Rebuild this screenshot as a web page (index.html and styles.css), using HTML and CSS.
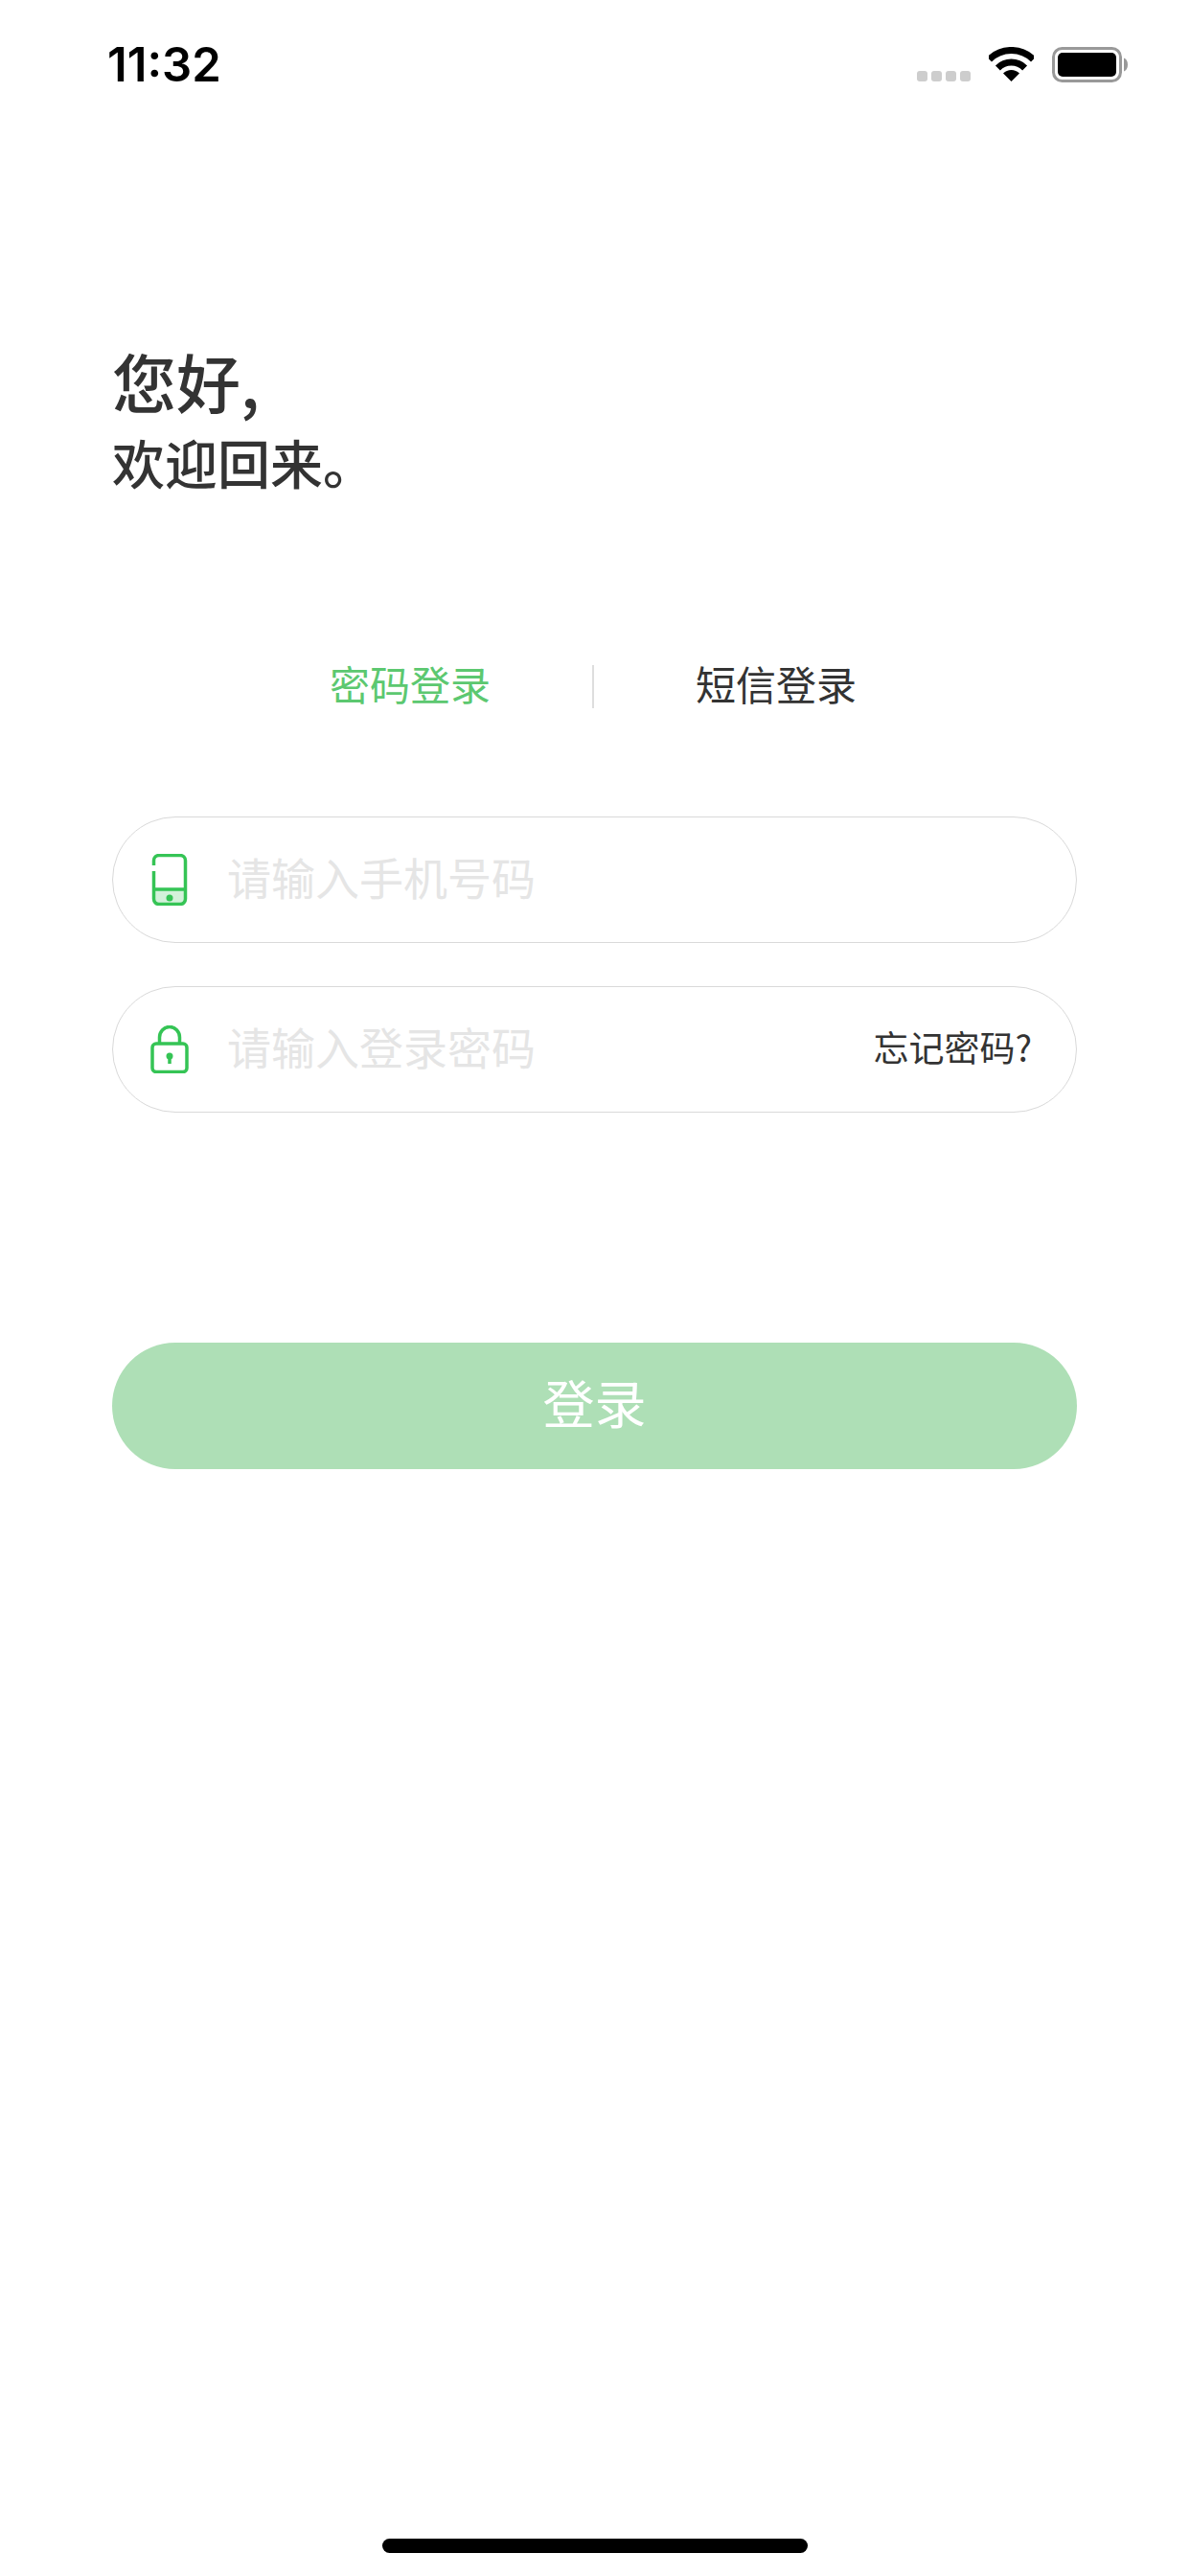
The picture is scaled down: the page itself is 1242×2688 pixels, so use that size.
FILE: index.html
```html
<!DOCTYPE html>
<html lang="zh-CN">
<head>
  <meta charset="UTF-8" />
  <meta name="viewport" content="width=device-width, initial-scale=1.0"/>
  <title>登录</title>
  <link rel="stylesheet" href="styles.css">
</head>
<body>
  <div class="page">
    <div class="status-bar">
      <div class="time">11:32</div>
      <div class="status-icons">
        <div class="signal"><i></i><i></i><i></i><i></i></div>
        <svg class="wifi" width="47" height="36" viewBox="0 0 47 36">
          <path d="M.5 13a32.5 32.5 0 0 1 46 0" fill="none" stroke="#000" stroke-width="7"/>
          <path d="M9.4 21.9a20 20 0 0 1 28.2 0" fill="none" stroke="#000" stroke-width="7"/>
          <path d="M23.5 36L15 27.5a12 12 0 0 1 17 0z" fill="#000"/>
        </svg>
        <svg class="battery" width="79" height="37" viewBox="0 0 79 37">
          <rect x="1.5" y="1.5" width="70" height="34" rx="9" fill="none" stroke="#999" stroke-width="3"/>
          <rect x="6" y="6" width="61" height="25" rx="5" fill="#000"/>
          <path d="M75 11.5c2.5 1 4 3.500 4 7s-1.500 6-4 7z" fill="#999"/>
        </svg>
      </div>
    </div>

    <div class="content">
      <h1 class="hello">您好,</h1>
      <h2 class="welcome">欢迎回来。</h2>

      <div class="tabs">
        <div class="tab active">密码登录</div>
        <div class="tab-line"></div>
        <div class="tab">短信登录</div>
      </div>

      <div class="field">
        <svg class="field-icon" width="40" height="54" viewBox="0 0 40 54">
          <path d="M3.500 37h33v10a5.500 5.500 0 0 1-5.500 5.500h-22a5.500 5.500 0 0 1-5.500-5.500z" fill="#d3f1da"/>
          <path d="M3.500 12v-5a5.500 5.500 0 0 1 5.500-5.500h22a5.500 5.500 0 0 1 5.500 5.500v40a5.500 5.500 0 0 1-5.500 5.500h-22a5.500 5.500 0 0 1-5.500-5.500v-29M3.500 37h33" fill="none" stroke="#35c455" stroke-width="3.500"/>
          <circle cx="20" cy="46" r="3.500" fill="#35c455"/>
        </svg>
        <span class="placeholder">请输入手机号码</span>
      </div>

      <div class="field">
        <svg class="field-icon" width="40" height="50" viewBox="0 0 40 50">
          <path d="M9.500 19v-6.500a10.500 11 0 0 1 21 0v6.500" fill="none" stroke="#35c455" stroke-width="3.500"/>
          <rect x="2" y="19" width="36" height="29.500" rx="4" fill="none" stroke="#35c455" stroke-width="3.500"/>
          <circle cx="20" cy="32" r="3.500" fill="#35c455"/>
          <path d="M20 33v7" fill="none" stroke="#35c455" stroke-width="3.500"/>
        </svg>
        <span class="placeholder">请输入登录密码</span>
        <span class="forgot">忘记密码?</span>
      </div>

      <div class="login-btn">登录</div>
    </div>

    <div class="home-bar"></div>
  </div>
</body>
</html>
```
FILE: styles.css
```css
:root {
  --font-cjk: 'Noto Sans CJK SC', 'Noto Sans', sans-serif;
  --color-green: #5cc870;
  --color-text: #333333;
  --color-line: #d9d9d9;
}
* { box-sizing: border-box; margin: 0; padding: 0; }
body {
  font-family: var(--font-cjk);
  background: #fff;
  color: var(--color-text);
}
.page {
  height: 2688px;
  display: flex; flex-direction: column;
  overflow: hidden;
}

.status-bar {
  display: flex; justify-content: space-between; align-items: flex-end;
  padding: 49px 65px 0 112px;
}
.time {
  font-family: 'Inter', sans-serif;
  font-size: 49px; font-weight: 600; line-height: 37px;
  color: #000;
}
.status-icons { display: flex; align-items: flex-end; gap: 19px; }
.signal { display: flex; gap: 4px; margin-bottom: 1px; }
.signal i { width: 11px; height: 11px; border-radius: 3px; background: #cdcdcd; }
.wifi { margin-bottom: 1px; }

.content { padding: 271px 118px 0 117px; }
.hello { font-size: 67px; font-weight: 500; line-height: 80px; }
.welcome { font-size: 55px; font-weight: 500; line-height: 70px; margin-top: 9px; }

.tabs {
  display: flex; justify-content: center; align-items: center; gap: 106px;
  height: 45px;
  margin-top: 178px;
  padding-right: 3px;
}
.tab { font-size: 42px; line-height: 45px; padding-bottom: 8px; }
.tab.active { color: var(--color-green); }
.tab-line { width: 2px; height: 45px; background: #dedede; }

.field {
  display: flex; align-items: center;
  height: 132px;
  margin-top: 45px;
  padding: 0 46px 0 39px;
  border: 1px solid var(--color-line);
  border-radius: 66px;
}
.tabs + .field { margin-top: 113px; }
.field-icon { flex: none; margin-right: 40px; }
.placeholder { flex: 1; font-size: 46px; line-height: 60px; padding-bottom: 8px; color: #e5e5e5; }
.forgot { font-size: 37px; line-height: 50px; padding-bottom: 6px; color: var(--color-text); }

.login-btn {
  height: 132px;
  margin-top: 240px;
  border-radius: 66px;
  background: #aedfb6;
  color: #fff;
  font-size: 54px; line-height: 124px;
  text-align: center;
}

.home-bar {
  width: 444px; height: 15px;
  margin: auto auto 24px;
  border-radius: 8px;
  background: #000;
}
```
